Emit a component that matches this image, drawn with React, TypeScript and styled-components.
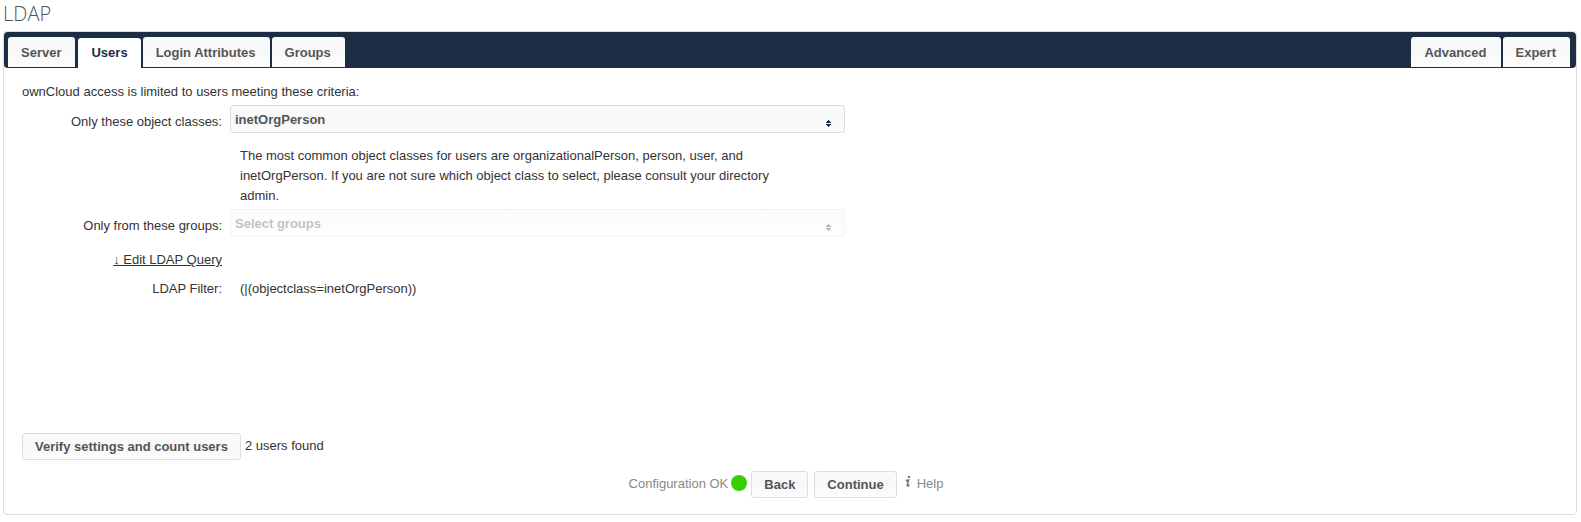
import React, { useState } from "react";
import styled, { createGlobalStyle } from "styled-components";

const GlobalStyle = createGlobalStyle`
  *, *::before, *::after { box-sizing: border-box; }
  body {
    margin: 0;
    background: #fff;
    color: #333;
    font-family: "Liberation Sans", Arial, sans-serif;
    font-size: 13px;
    line-height: 20px;
  }
`;

const Page = styled.main`
  padding: 0 4px 7px 3px;
`;

const Title = styled.h2`
  margin: 0;
  padding-top: 1px;
  height: 31px;
  color: #555;
  font-family: "Open Sans", sans-serif;
  font-size: 20px;
  font-weight: 300;
  line-height: 26px;
`;

const Panel = styled.section`
  border: 1px solid #ddd;
  border-radius: 4px;
`;

const TabBar = styled.nav`
  display: flex;
  align-items: flex-end;
  gap: 2px;
  padding: 5px 6px 0 4px;
  background: #1d2d44;
  border-bottom: 1px solid #1d2d44;
  border-radius: 4px;
`;

const Spacer = styled.span`
  flex: 1;
`;

const Tab = styled.button<{ $active?: boolean }>`
  height: 30px;
  margin: ${(p) => (p.$active ? "0 0 -1px 1px" : "0")};
  padding: ${(p) => (p.$active ? "0 13px" : "0 14px 0 13px")};
  border: 0;
  border-radius: 3px 3px 0 0;
  background: ${(p) => (p.$active ? "#fff" : "linear-gradient(#fafafa, #f8f8f8 50%, #fcfcfc)")};
  color: ${(p) => (p.$active ? "#1d2d44" : "#555")};
  font: bold 13px/${(p) => (p.$active ? 30 : 32)}px "Liberation Sans", Arial, sans-serif;
  cursor: pointer;
`;

const Content = styled.form`
  padding: 14px 18px 16px;
`;

const Intro = styled.p`
  margin: 0 0 3px;
`;

const Fields = styled.div`
  display: grid;
  grid-template-columns: 200px minmax(0, 615px);
  column-gap: 8px;
  min-height: 328px;
  align-content: start;
`;

const FieldLabel = styled.label`
  padding-top: 7px;
  text-align: right;
`;

const FilterLabel = styled.span`
  grid-column: 1;
  padding-top: 9px;
  text-align: right;
`;

const SelectBox = styled.span<{ $disabled?: boolean }>`
  position: relative;
  display: block;
  opacity: ${(p) => (p.$disabled ? 0.35 : 1)};
`;

const Select = styled.select`
  display: block;
  width: 100%;
  height: 28px;
  padding: 0 24px 0 4px;
  appearance: none;
  border: 1px solid #ddd;
  border-radius: 3px;
  background: linear-gradient(#fafafa, #f8f8f8 50%, #fcfcfc);
  color: #555;
  font: bold 13px "Liberation Sans", Arial, sans-serif;
  opacity: 1;
`;

const Arrows = styled.svg`
  position: absolute;
  right: 14px;
  bottom: 5px;
  pointer-events: none;
`;

const Hint = styled.p`
  grid-column: 2;
  max-width: 545px;
  margin: 0;
  padding: 13px 0 3px 10px;
`;

const QueryLink = styled.a`
  grid-column: 1;
  justify-self: end;
  margin-top: 13px;
  color: #333;
  text-decoration: underline;
`;

const FilterValue = styled.span`
  padding: 9px 0 0 10px;
`;

const VerifyRow = styled.div`
  display: flex;
  gap: 4px;
`;

const Footer = styled.div`
  display: flex;
  justify-content: center;
  margin-top: 11px;
  padding-right: 8px;
  color: #888;
`;

const Button = styled.button`
  height: 27px;
  padding: 0 12px;
  border: 1px solid #ddd;
  border-radius: 3px;
  background: linear-gradient(#fafafa, #f8f8f8 50%, #fcfcfc);
  color: #555;
  font: bold 13px/25px "Liberation Sans", Arial, sans-serif;
  cursor: pointer;
`;

const Caption = styled.span`
  padding-top: 3px;
`;

const StatusDot = styled.span`
  width: 16px;
  height: 16px;
  margin: 4px 4px 0 3px;
  border-radius: 50%;
  background: #37ce02;
`;

const ButtonPair = styled.div`
  display: flex;
  gap: 6px;
`;

const HelpLink = styled.a`
  display: flex;
  margin-left: 8px;
  padding-top: 3px;
  gap: 6px;
  color: #888;
  text-decoration: none;
`;

function SortArrows() {
  return (
    <Arrows width="5" height="8" viewBox="0 0 5 8" aria-hidden="true" shapeRendering="crispEdges">
      <path d="M2 0H3V1H4V2H5V3H0V2H1V1H2ZM0 4H5V5H4V6H3V7H2V6H1V5H0Z" fill="#1d2d44" />
    </Arrows>
  );
}

function InfoIcon() {
  return (
    <svg width="6" height="16" viewBox="0 0 6 16" aria-hidden="true">
      <circle cx="4" cy="2.9" r="1.2" fill="#777" />
      <path d="M0.8 6.6 L3.6 6 L2.2 11.4 Q2 12.7 4.4 11" fill="none" stroke="#777" strokeWidth="1.6" />
    </svg>
  );
}

const leftTabs = ["Server", "Users", "Login Attributes", "Groups"];
const rightTabs = ["Advanced", "Expert"];

export default function App() {
  const [active, setActive] = useState("Users");
  const renderTab = (name: string) => (
    <Tab key={name} type="button" $active={name === active} onClick={() => setActive(name)}>
      {name}
    </Tab>
  );

  return (
    <Page>
      <GlobalStyle />
      <Title>LDAP</Title>
      <Panel>
        <TabBar aria-label="LDAP sections">
          {leftTabs.map(renderTab)}
          <Spacer />
          {rightTabs.map(renderTab)}
        </TabBar>
        <Content onSubmit={(e) => e.preventDefault()}>
          <Intro>ownCloud access is limited to users meeting these criteria:</Intro>
          <Fields>
            <FieldLabel htmlFor="classes">Only these object classes:</FieldLabel>
            <SelectBox>
              <Select id="classes">
                <option>inetOrgPerson</option>
              </Select>
              <SortArrows />
            </SelectBox>
            <Hint>
              The most common object classes for users are organizationalPerson, person, user, and
              inetOrgPerson. If you are not sure which object class to select, please consult your
              directory admin.
            </Hint>
            <FieldLabel htmlFor="groups">Only from these groups:</FieldLabel>
            <SelectBox $disabled>
              <Select id="groups" disabled>
                <option>Select groups</option>
              </Select>
              <SortArrows />
            </SelectBox>
            <QueryLink href="#query">↓ Edit LDAP Query</QueryLink>
            <FilterLabel>LDAP Filter:</FilterLabel>
            <FilterValue>(|(objectclass=inetOrgPerson))</FilterValue>
          </Fields>
          <VerifyRow>
            <Button type="button">Verify settings and count users</Button>
            <Caption>2 users found</Caption>
          </VerifyRow>
          <Footer>
            <Caption>Configuration OK</Caption>
            <StatusDot />
            <ButtonPair>
              <Button type="button">Back</Button>
              <Button type="submit">Continue</Button>
            </ButtonPair>
            <HelpLink href="#help">
              <InfoIcon />
              Help
            </HelpLink>
          </Footer>
        </Content>
      </Panel>
    </Page>
  );
}
